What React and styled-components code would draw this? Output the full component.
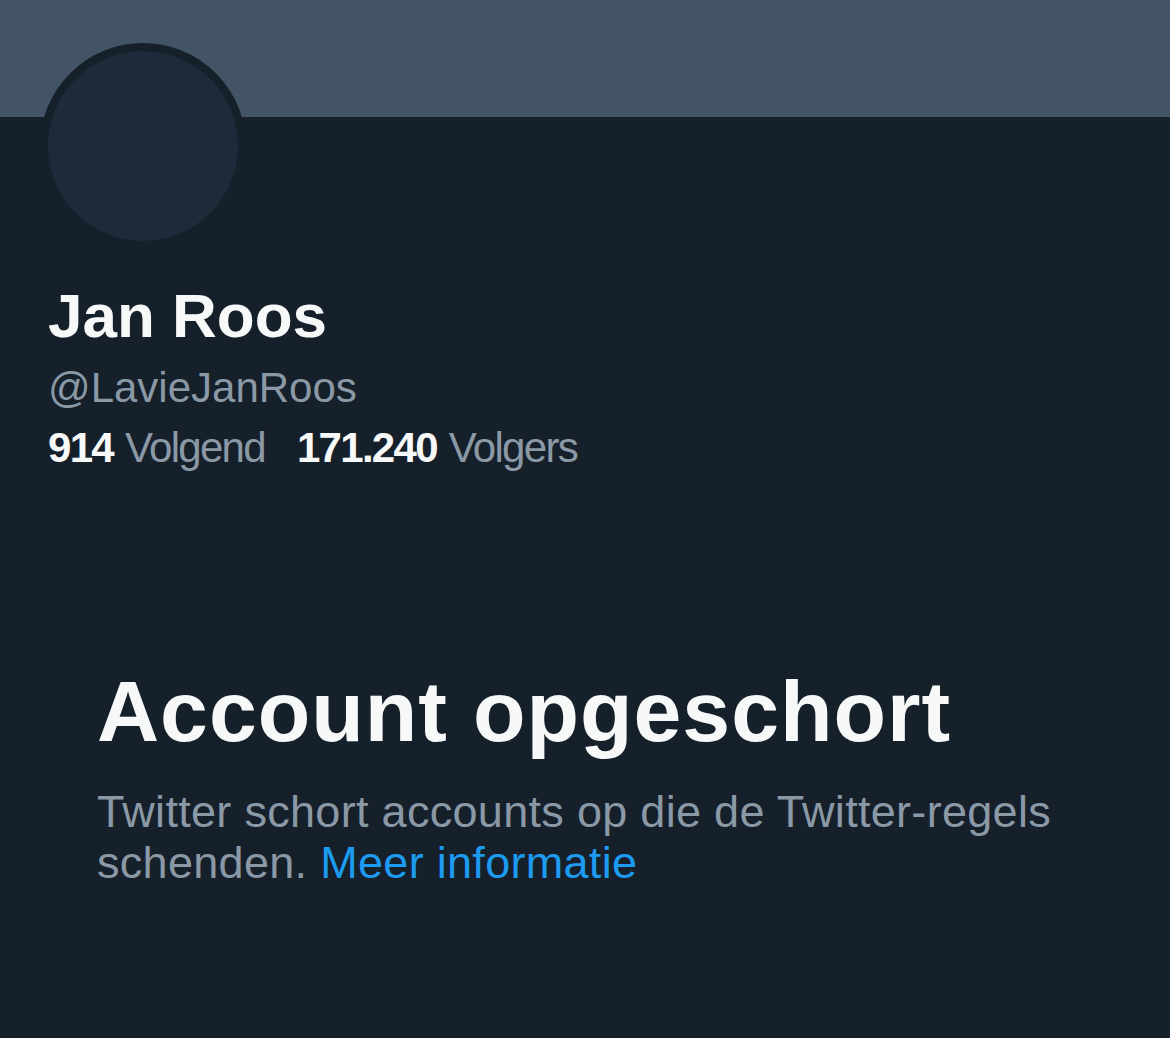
import React from 'react'
import styled, { createGlobalStyle } from 'styled-components'

const GlobalStyle = createGlobalStyle`
  html, body {
    margin: 0;
    padding: 0;
    background: #15202b;
  }
  body {
    font-family: "Liberation Sans", Arial, sans-serif;
    -webkit-font-smoothing: antialiased;
  }
`

const Page = styled.main`
  width: 1170px;
  min-height: 1038px;
  background: #15202b;
  overflow: hidden;
`

const Banner = styled.div`
  height: 117px;
  background: #425466;
`

const Profile = styled.section`
  padding: 0 48px;
`

const Avatar = styled.div`
  width: 190px;
  height: 190px;
  margin-top: -74px;
  margin-left: -8px;
  border-radius: 50%;
  background: #1e2939;
  border: 8px solid #15202b;
`

const Name = styled.h1`
  margin: 29px 0 0;
  font-size: 62px;
  line-height: 76px;
  font-weight: 700;
  color: #f7f9f9;
`

const Handle = styled.div`
  margin-top: 8px;
  font-size: 42px;
  line-height: 52px;
  letter-spacing: 0;
  color: #8b98a5;
`

const Stats = styled.div`
  display: flex;
  gap: 32px;
  margin-top: 8px;
  font-size: 42px;
  line-height: 52px;
  letter-spacing: -1.7px;
  color: #8b98a5;
`

const Stat = styled.span`
  strong {
    color: #f7f9f9;
    font-weight: 700;
    margin-right: 12px;
  }
`

const Notice = styled.section`
  margin: 187px 0 0 97px;
  width: 990px;
`

const Title = styled.h2`
  margin: 0;
  font-size: 86px;
  line-height: 100px;
  font-weight: 700;
  letter-spacing: 1px;
  color: #f7f9f9;
`

const Message = styled.p`
  margin: 25px 0 0;
  font-size: 45px;
  line-height: 51px;
  letter-spacing: 0.3px;
  color: #8b98a5;
`

const Link = styled.a`
  color: #1d9bf0;
  text-decoration: none;
`

const App = () => {
  return (
    <Page>
      <GlobalStyle />
      <Banner />
      <Profile>
        <Avatar />
        <Name>Jan Roos</Name>
        <Handle>@LavieJanRoos</Handle>
        <Stats>
          <Stat><strong>914</strong>Volgend</Stat>
          <Stat><strong>171.240</strong>Volgers</Stat>
        </Stats>
      </Profile>
      <Notice>
        <Title>Account opgeschort</Title>
        <Message>
          Twitter schort accounts op die de Twitter-regels schenden.{' '}
          <Link href="#">Meer informatie</Link>
        </Message>
      </Notice>
    </Page>
  )
}

export default App
